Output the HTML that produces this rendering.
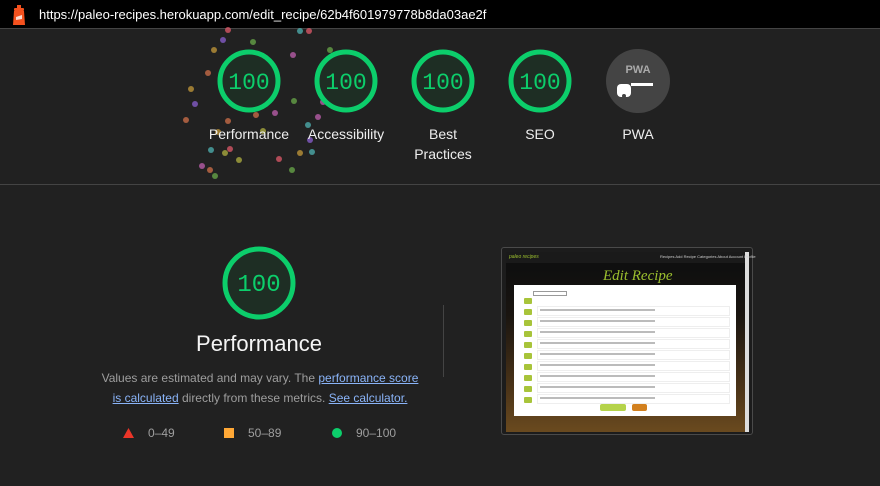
<!DOCTYPE html>
<html><head><meta charset="utf-8"><style>
*{margin:0;padding:0;box-sizing:border-box}
body{width:880px;height:486px;background:#212121;font-family:"Liberation Sans",Arial,sans-serif;position:relative;overflow:hidden;color:#f5f5f5}
.top{position:absolute;left:0;top:0;width:880px;height:29px;background:#000;border-bottom:1px solid #444}
.url{position:absolute;left:39px;top:7px;font-size:13px;color:#fff}
.dot{position:absolute;width:6px;height:6px;border-radius:50%;opacity:.75}
.g{position:absolute}
.lbl{position:absolute;font-size:14px;text-align:center;width:100px;line-height:20px;color:#eee}
.hr{position:absolute;left:0;top:184px;width:880px;height:1px;background:#444}
.desc{position:absolute;left:100px;top:368px;width:320px;text-align:center;font-size:12px;line-height:20px;color:#9e9e9e}
.desc a{color:#8ab4f8;text-decoration:underline}
.leg{position:absolute;top:426px;font-size:12px;color:#9e9e9e}
</style></head><body>
<div class="top">
<svg style="position:absolute;left:11px;top:5px" width="16" height="20" viewBox="0 0 16 20"><rect x="6" y="0" width="4" height="3" fill="#f4511e"/><rect x="3" y="3" width="10" height="3" rx="1" fill="#f4511e"/><path d="M3 6h10l1 14H2z" fill="#f4511e"/><path d="M5 12l6-2v4l-6 1z" fill="#fff" opacity=".8"/></svg>
<div class="url">https://paleo-recipes.herokuapp.com/edit_recipe/62b4f601979778b8da03ae2f</div>
</div>
<div id="dots"></div>
<svg class="g" style="left:215px;top:47px" width="68" height="68"><circle cx="34" cy="34" r="29" fill="#1e2e24" stroke="#0cce6b" stroke-width="5"/><text x="34" y="42" text-anchor="middle" font-family="Liberation Mono,monospace" font-size="23" fill="#0cce6b">100</text></svg>
<svg class="g" style="left:312px;top:47px" width="68" height="68"><circle cx="34" cy="34" r="29" fill="#1e2e24" stroke="#0cce6b" stroke-width="5"/><text x="34" y="42" text-anchor="middle" font-family="Liberation Mono,monospace" font-size="23" fill="#0cce6b">100</text></svg>
<svg class="g" style="left:409px;top:47px" width="68" height="68"><circle cx="34" cy="34" r="29" fill="#1e2e24" stroke="#0cce6b" stroke-width="5"/><text x="34" y="42" text-anchor="middle" font-family="Liberation Mono,monospace" font-size="23" fill="#0cce6b">100</text></svg>
<svg class="g" style="left:506px;top:47px" width="68" height="68"><circle cx="34" cy="34" r="29" fill="#1e2e24" stroke="#0cce6b" stroke-width="5"/><text x="34" y="42" text-anchor="middle" font-family="Liberation Mono,monospace" font-size="23" fill="#0cce6b">100</text></svg>
<svg class="g" style="left:605px;top:48px" width="66" height="66"><circle cx="33" cy="33" r="32" fill="#444"/><text x="33" y="25" text-anchor="middle" font-size="11" font-weight="bold" fill="#aaa">PWA</text><rect x="26" y="35" width="22" height="3" fill="#fff"/><rect x="12" y="36" width="14" height="13" rx="4" fill="#fff"/><circle cx="19" cy="48" r="2" fill="#444"/></svg>
<div class="lbl" style="left:199px;top:124px">Performance</div>
<div class="lbl" style="left:296px;top:124px">Accessibility</div>
<div class="lbl" style="left:393px;top:124px">Best<br>Practices</div>
<div class="lbl" style="left:490px;top:124px">SEO</div>
<div class="lbl" style="left:588px;top:124px">PWA</div>
<div class="hr"></div>
<svg class="g" style="left:221px;top:245px" width="76" height="76"><circle cx="38" cy="38" r="34" fill="#1e2e24" stroke="#0cce6b" stroke-width="5"/><text x="38" y="46" text-anchor="middle" font-family="Liberation Mono,monospace" font-size="24" fill="#0cce6b">100</text></svg>
<div style="position:absolute;left:159px;top:331px;width:200px;text-align:center;font-size:22px;color:#f5f5f5">Performance</div>
<div class="desc">Values are estimated and may vary. The <a>performance score is calculated</a> directly from these metrics. <a>See calculator.</a></div>
<svg class="g" style="left:123px;top:428px" width="11" height="10"><path d="M5.5 0L11 10H0z" fill="#eb3528"/></svg><div class="leg" style="left:148px">0–49</div>
<div class="g" style="left:224px;top:428px;width:10px;height:10px;background:#ffa836"></div><div class="leg" style="left:248px">50–89</div>
<div class="g" style="left:332px;top:428px;width:10px;height:10px;border-radius:50%;background:#0cce6b"></div><div class="leg" style="left:356px">90–100</div>
<div class="g" style="left:443px;top:305px;width:1px;height:72px;background:#444"></div>
<div class="g" style="left:501px;top:247px;width:252px;height:188px;border:1px solid #4a4a4a;border-radius:3px;background:#1c1c1c"></div>
<div class="g" style="left:506px;top:252px;width:239px;height:180px;background:linear-gradient(#0f0f0f 10%,#1a1510 35%,#4a3318 75%,#6a4a1f)"></div>
<div class="g" style="left:506px;top:252px;width:239px;height:11px;background:#1a1a1a"></div>
<div class="g" style="left:745px;top:252px;width:4px;height:180px;background:#ddd"></div>
<div class="g" style="left:509px;top:254px;font-size:5px;color:#9bbf2e;font-style:italic">paleo recipes</div>
<div class="g" style="left:660px;top:254px;font-size:4px;color:#ccc">Recipes Add Recipe Categories About Account Profile</div>
<div class="g" style="left:603px;top:268px;font-size:15px;color:#9bbf2e;font-style:italic;font-family:'Liberation Serif',serif">Edit Recipe</div>
<div class="g" style="left:514px;top:285px;width:222px;height:131px;background:#fff"></div>
<div class="g" style="left:533px;top:291px;width:34px;height:5px;border:1px solid #999"></div>
<div id="rows"></div>
<div class="g" style="left:600px;top:404px;width:26px;height:7px;background:#b5d34a;border-radius:2px"></div>
<div class="g" style="left:632px;top:404px;width:15px;height:7px;background:#d2801e;border-radius:2px"></div>
<script>
var d=document.getElementById('dots'),c=['#e05a6a','#4fb3b3','#c49a3a','#8a5fd0','#6aaa4a','#c060b0','#d0704a','#b0b040'],h='';
var p=[[228,30],[300,31],[214,50],[223,40],[253,42],[293,55],[208,73],[244,61],[240,66],[257,70],[191,89],[271,94],[294,101],[275,113],[256,115],[225,153],[230,149],[211,150],[218,132],[195,104],[215,176],[202,166],[210,170],[239,160],[279,159],[308,125],[300,153],[310,140],[292,170],[318,117],[228,121],[263,131],[309,31],[312,152],[231,103],[256,100],[330,50],[323,102],[186,120]];
p.forEach(function(q,i){h+='<div class="dot" style="left:'+(q[0]-3)+'px;top:'+(q[1]-3)+'px;background:'+c[i%8]+'"></div>'});
d.innerHTML=h;
var r=document.getElementById('rows'),s='';
for(var i=0;i<10;i++){var y=294+i*11;s+='<div class="g" style="left:524px;top:'+(y+4)+'px;width:8px;height:6px;background:#a8c43a;border-radius:1px"></div>';if(i>0)s+='<div class="g" style="left:537px;top:'+(y+1)+'px;width:193px;height:10px;border:1px solid #eee"><div style="margin:2px;height:2px;width:60%;background:#bbb"></div></div>';}
r.innerHTML=s;
</script>
</body></html>
